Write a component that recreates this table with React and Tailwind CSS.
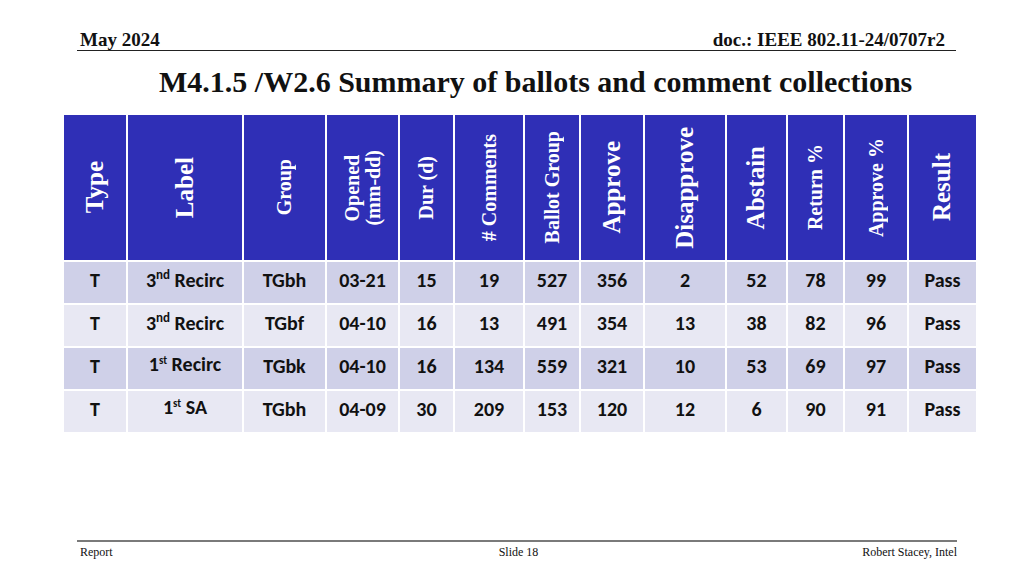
import React from "react";

// column widths (px) of the ballot summary table
const COLS = "grid-cols-[62px_114px_81px_71px_53px_68px_54px_62px_80px_59px_55px_62px_67px]";

const HEADERS = [
  { label: "Type", big: true },
  { label: "Label", big: true },
  { label: "Group" },
  { label: ["Opened", "(mm-dd)"] },
  { label: "Dur (d)" },
  { label: "# Comments" },
  { label: "Ballot Group" },
  { label: "Approve", big: true },
  { label: "Disapprove", big: true },
  { label: "Abstain", big: true },
  { label: "Return %" },
  { label: "Approve %" },
  { label: "Result", big: true },
];

const ROWS = [
  { label: ["3", "nd", " Recirc"], group: "TGbh", vals: ["03-21", "15", "19", "527", "356", "2", "52", "78", "99", "Pass"] },
  { label: ["3", "nd", " Recirc"], group: "TGbf", vals: ["04-10", "16", "13", "491", "354", "13", "38", "82", "96", "Pass"] },
  { label: ["1", "st", " Recirc"], group: "TGbk", vals: ["04-10", "16", "134", "559", "321", "10", "53", "69", "97", "Pass"], small: true },
  { label: ["1", "st", " SA"], group: "TGbh", vals: ["04-09", "30", "209", "153", "120", "12", "6", "90", "91", "Pass"], small: true },
];

const serif = "font-['Liberation_Serif','Times_New_Roman',serif]";
const body = "font-['Carlito','Calibri','Lato',sans-serif]";

function HeadCell({ h }) {
  return (
    <div className="bg-[#2f2fb6] h-[145px] flex items-center justify-center">
      <div
        className={`${serif} font-bold text-white leading-[1.05] rotate-180 [writing-mode:vertical-rl] text-center ${
          h.big ? "text-[25px]" : "text-[20px]"
        }`}
      >
        {Array.isArray(h.label) ? (
          <>
            {h.label[0]}
            <br />
            {h.label[1]}
          </>
        ) : (
          h.label
        )}
      </div>
    </div>
  );
}

function Cell({ children, bg, className = "" }) {
  return (
    <div className={`${bg} h-[41px] flex justify-center pt-[4px] text-[20px] leading-[28px] font-bold text-[#111] ${className}`}>
      {children}
    </div>
  );
}

export default function App() {
  return (
    <div className="w-[1024px] h-[576px] bg-white flex flex-col overflow-hidden">
      {/* top header */}
      <div className={`ml-[77px] mr-[68px] mt-[29px] pl-[3px] pr-[11px] flex justify-between items-end border-b-[1.5px] border-[#222] ${serif} font-bold text-[19px] leading-[21px] text-[#111]`}>
        <span>May 2024</span>
        <span>doc.: IEEE 802.11-24/0707r2</span>
      </div>

      <h1 className={`${serif} font-bold text-[30px] leading-[34px] text-[#111] pl-[159px] mt-[14px]`}>
        M4.1.5 /W2.6 Summary of ballots and comment collections
      </h1>

      {/* table */}
      <div className={`ml-[64px] mt-[16px] w-[912px] grid ${COLS} gap-[2px] bg-white ${body}`}>
        {HEADERS.map((h, i) => (
          <HeadCell key={i} h={h} />
        ))}
        {ROWS.map((r, ri) => {
          const bg = ri % 2 === 0 ? "bg-[#cfd0e8]" : "bg-[#e8e8f3]";
          return (
            <React.Fragment key={ri}>
              <Cell bg={bg}>T</Cell>
              <Cell bg={bg} className={r.small ? "text-[17px] !pt-[2px]" : ""}>
                <span>
                  {r.label[0]}
                  <sup className={r.small ? "text-[11px] -top-[7px]" : "text-[13px] -top-[8px]"}>{r.label[1]}</sup>
                  {r.label[2]}
                </span>
              </Cell>
              <Cell bg={bg}>{r.group}</Cell>
              {r.vals.map((v, vi) => (
                <Cell key={vi} bg={bg}>
                  {v}
                </Cell>
              ))}
            </React.Fragment>
          );
        })}
      </div>

      {/* footer */}
      <div className="mt-auto mb-[17px] ml-[77px] mr-[67px]">
        <div className="border-t-[2px] border-[#7a7a7a]" />
        <div className={`${serif} text-[12px] leading-[14px] text-[#111] pt-[3px] pl-[3px] grid grid-cols-3`}>
          <span>Report</span>
          <span className="text-center">Slide 18</span>
          <span className="text-right">Robert Stacey, Intel</span>
        </div>
      </div>
    </div>
  );
}
